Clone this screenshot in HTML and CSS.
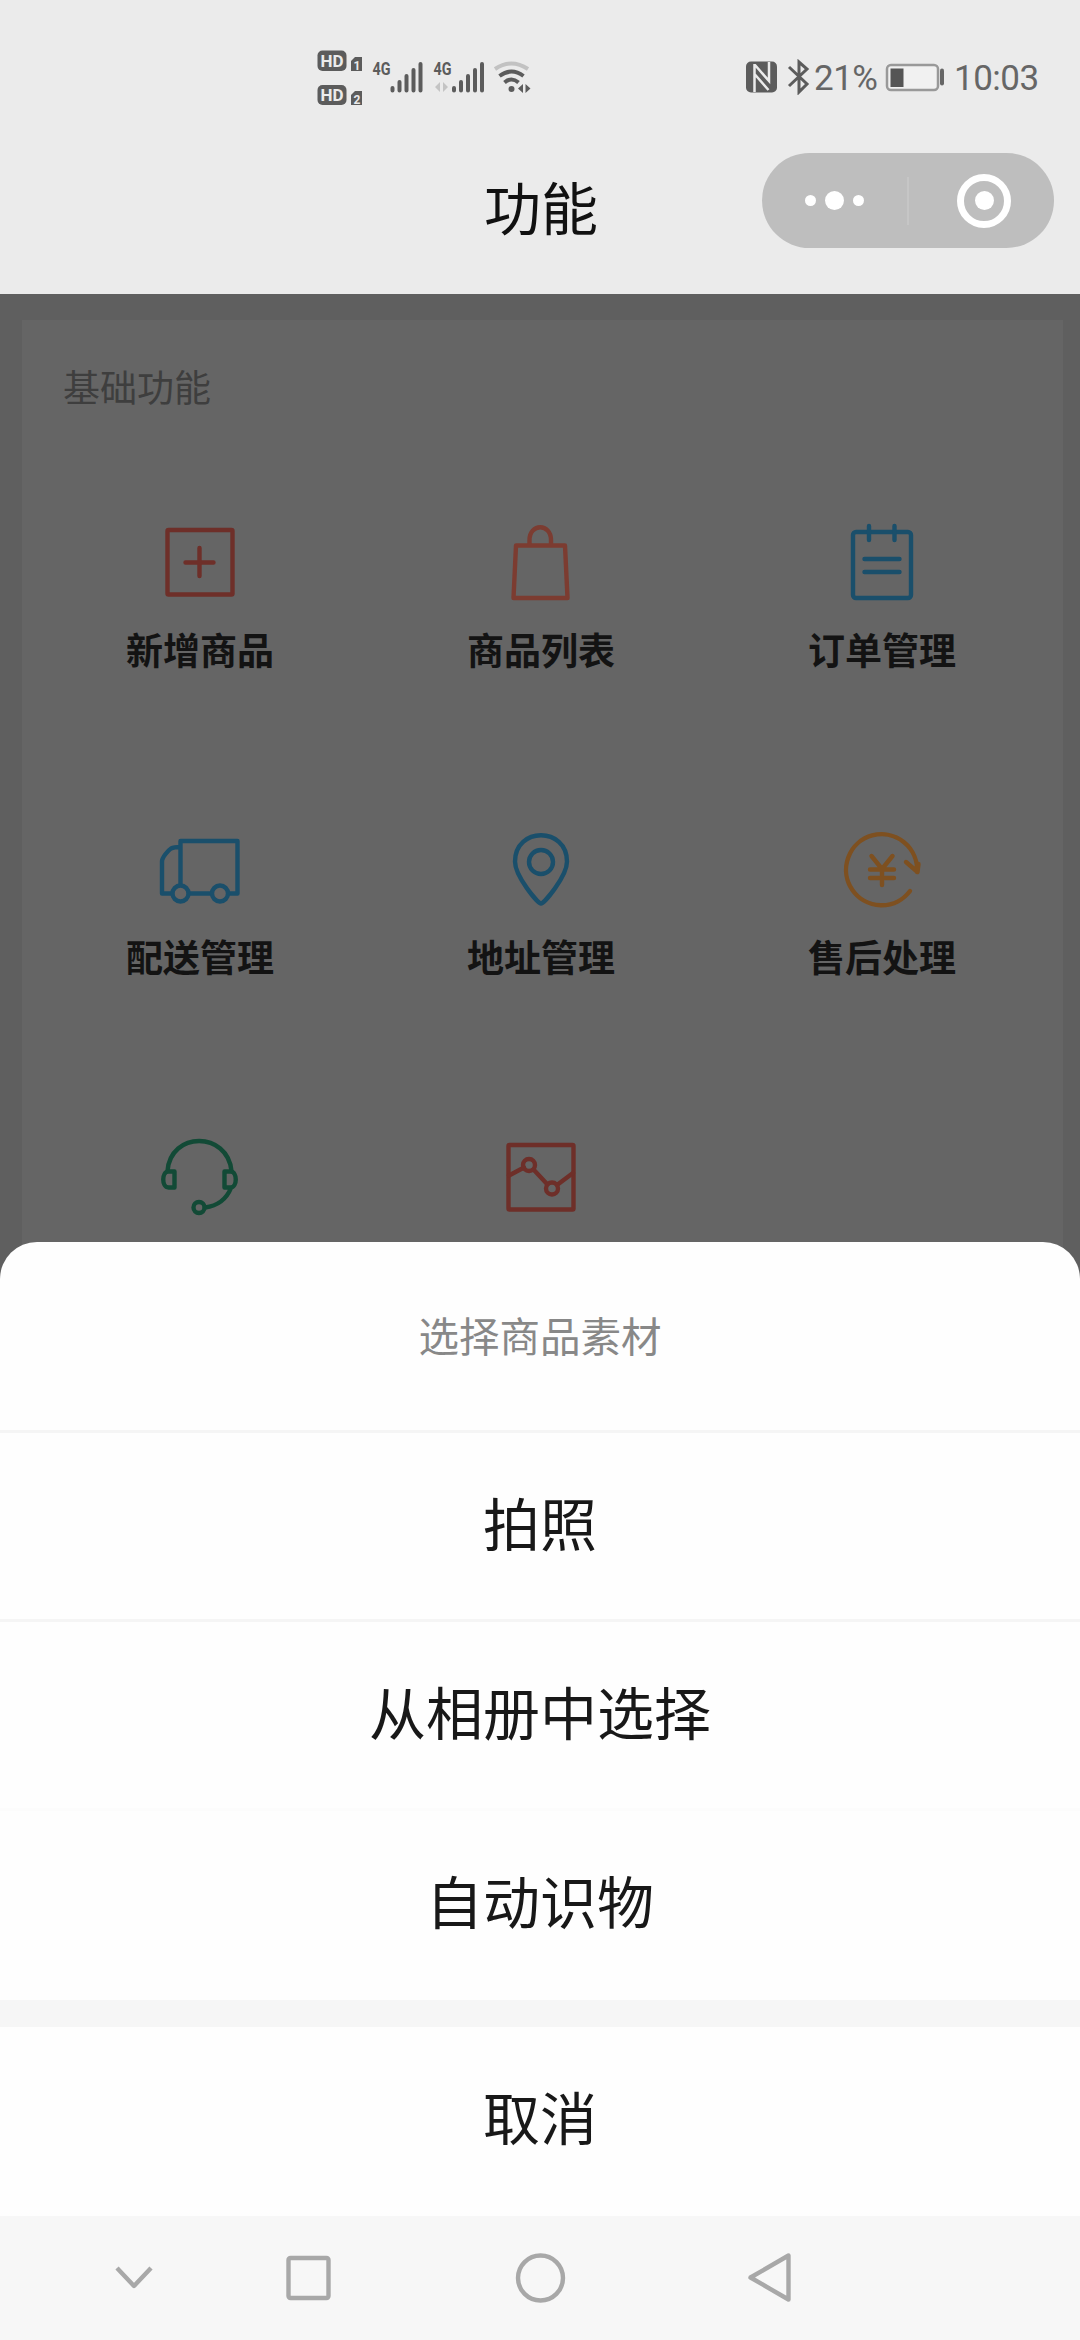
FILE: index.html
```html
<!DOCTYPE html>
<html lang="zh-CN">
<head>
<meta charset="utf-8">
<title>功能</title>
<link rel="stylesheet" href="styles.css">
</head>
<body>
<div class="screen">
  <header class="header">
    <div class="status">
      <svg class="status-left" width="220" height="75" viewBox="315 40 220 75">
        <g fill="#5c5c5c">
          <rect x="317.500" y="50.500" width="29" height="20.500" rx="5"/>
          <path d="M351 61l4-4h7v14h-11z"/>
          <rect x="317.500" y="85" width="29" height="20" rx="5"/>
          <path d="M351 95l4-4h7v14h-11z"/>
        </g>
        <g class="badge-text" fill="#ebebeb">
          <text x="332" y="67" font-size="17" text-anchor="middle">HD</text>
          <text x="357" y="69.500" font-size="12" text-anchor="middle">1</text>
          <text x="332" y="101" font-size="17" text-anchor="middle">HD</text>
          <text x="357" y="103.500" font-size="12" text-anchor="middle">2</text>
        </g>
        <g class="network-text" fill="#5c5c5c">
          <text x="372.500" y="75" font-size="18" textLength="18" lengthAdjust="spacingAndGlyphs">4G</text>
          <text x="433.500" y="75" font-size="18" textLength="18" lengthAdjust="spacingAndGlyphs">4G</text>
        </g>
        <g stroke="#5c5c5c" stroke-width="4" stroke-linecap="round">
          <path d="M392.500 88v2.500M399.500 82v8.500M406.500 76v14.500M413.500 70v20.500M420.500 64v26.500"/>
          <path d="M454 88v2.500M461 82v8.500M468 76v14.500M475 70v20.500M482 64v26.500"/>
        </g>
        <path d="M440 82v10l-5-5zM443 82v10l5-5z" fill="#c4c4c4"/>
        <path d="M495 69q16-11 33 0" fill="none" stroke="#c2c2c2" stroke-width="4"/>
        <path d="M499.500 76q12-9 24 0M504.500 82.500q7-6 14 0" fill="none" stroke="#5c5c5c" stroke-width="4"/>
        <circle cx="511.500" cy="89" r="3" fill="#5c5c5c"/>
        <path d="M523 84v9l-5-4.500zM525.500 84v9l5-4.500z" fill="#5c5c5c"/>
      </svg>
      <div class="status-right">
        <svg width="66" height="36" viewBox="744 59 66 36">
          <rect x="746" y="61.500" width="31" height="31" rx="5" fill="#5c5c5c"/>
          <path d="M754.500 92V64M769 62v19L755 65M754.500 74l14 16" fill="none" stroke="#ebebeb" stroke-width="2.500"/>
          <path d="M789 67l18 17-8 8V62l8 7-18 17" fill="none" stroke="#5c5c5c" stroke-width="3"/>
        </svg>
        <span class="battery-level">21%</span>
        <svg class="battery" width="62" height="32" viewBox="884 61 62 32">
          <rect x="887" y="65" width="51" height="25" rx="4" fill="#f1f1f1" stroke="#999" stroke-width="2.500"/>
          <path d="M890.500 68.500h13v18.500h-13z" fill="#555"/>
          <path d="M942 70.500v13" stroke="#666" stroke-width="4" stroke-linecap="round"/>
        </svg>
        <time class="clock">10:03</time>
      </div>
    </div>
    <div class="titlebar">
      <h1 class="title">功能</h1>
      <div class="capsule">
        <div class="dots"><i class="dot"></i><i class="dot dot-big"></i><i class="dot"></i></div>
        <i class="capsule-line"></i>
        <i class="target"><b class="target-core"></b></i>
      </div>
    </div>
  </header>

  <main class="page">
    <section class="card">
      <h2 class="card-title">基础功能</h2>
      <div class="grid">
        <div class="item">
          <svg class="icon red" viewBox="155 520 90 90"><rect x="167.500" y="530" width="65" height="64.500" rx="1"/><path d="M185.500 562.500h28M199.500 548v28"/></svg>
          <span>新增商品</span>
        </div>
        <div class="item">
          <svg class="icon brick" viewBox="495 520 90 90"><path d="M515 545.500h49l2.500 52.500h-54zM528.500 545v-5c0-17 21.500-17 21.500 0v5"/></svg>
          <span>商品列表</span>
        </div>
        <div class="item">
          <svg class="icon blue" viewBox="836 520 90 90"><rect x="852" y="532" width="58" height="66" rx="3"/><path d="M868 526v14M893.500 526v14M863.500 559h35M863.500 572h35"/></svg>
          <span>订单管理</span>
        </div>
        <div class="item">
          <svg class="icon blue" viewBox="155 827 90 90"><path d="M172 893.500h-10v-32c0-4 6-11 9-13 2-1 5-1.500 9-1.500M180.500 884v-43h57v52.500h-9M189 893.500h22"/><circle cx="180.500" cy="893.500" r="8"/><circle cx="220" cy="893.500" r="8"/></svg>
          <span>配送管理</span>
        </div>
        <div class="item">
          <svg class="icon blue" viewBox="495 827 90 90"><path d="M540 903.500c-3 0-26-27-26-42 0-35 52-35 52 0 0 15-23 42-26 42z"/><circle cx="540" cy="862" r="12"/></svg>
          <span>地址管理</span>
        </div>
        <div class="item">
          <svg class="icon orange" viewBox="836 827 90 90"><path d="M909 891a35.500 35.500 0 1 1 7-19M905 862l11.500 10 1-8"/><path d="M870.500 856l10.500 13 10.500-13M881 869v16M869 869.500h24M869 878h24"/></svg>
          <span>售后处理</span>
        </div>
        <div class="item">
          <svg class="icon green" viewBox="155 1134 90 90"><path d="M167.500 1171c3-40 60-40 64 0"/><path d="M174.500 1171.500h-6c-7 0-7 16 0 16h6zM224.500 1171.500h6c7 0 7 16 0 16h-6zM231 1188q-7 17-26 19.500"/><circle cx="199" cy="1207.500" r="5.500"/></svg>
        </div>
        <div class="item">
          <svg class="icon red" viewBox="495 1134 90 90"><rect x="507.500" y="1145" width="65" height="64.500" rx="1"/><path d="M508 1175.500l15-8M532.500 1169.500l14 15M556 1185l16-12"/><circle cx="528" cy="1165" r="6"/><circle cx="551" cy="1188.500" r="6"/></svg>
        </div>
      </div>
    </section>
  </main>

  <div class="sheet">
    <div class="sheet-title">选择商品素材</div>
    <div class="option ruled">拍照</div>
    <div class="option ruled faint">从相册中选择</div>
    <div class="option">自动识物</div>
    <div class="option cancel">取消</div>
    <nav class="nav">
      <svg width="1080" height="124" viewBox="0 2216 1080 124">
        <path d="M117 2268l17 18 17-18"/>
        <rect x="288.500" y="2258" width="40" height="40" rx="2"/>
        <path d="M788.500 2255.500v44l-38-22z"/>
        <circle cx="540.500" cy="2278" r="22.500"/>
      </svg>
    </nav>
  </div>
</div>
</body>
</html>
```
FILE: styles.css
```css
* { box-sizing: border-box; }
body {
  margin: 0;
  font-family: "Noto Sans CJK SC", sans-serif;
}
.screen {
  position: relative;
  width: 1080px;
  height: 2340px;
  overflow: hidden;
  background: #5f5f5f;
}
svg { display: block; flex: none; }

.header { height: 294px; background: #ebebeb; }
.status {
  display: flex;
  justify-content: space-between;
  height: 115px;
  padding: 40px 43px 0 315px;
}
.badge-text { font-family: Roboto, sans-serif; font-weight: 700; }
.network-text { font-family: Roboto, sans-serif; font-weight: 700; }
.status-right {
  display: flex;
  align-items: flex-start;
  padding-top: 19px;
  font: 35px/40px Roboto, sans-serif;
  color: #666;
}
.battery-level { margin-left: 4px; width: 70px; letter-spacing: -.5px; }
.battery { margin-top: 2px; }
.clock { margin-left: 8px; width: 83px; letter-spacing: -.5px; }

.titlebar {
  display: grid;
  grid-template-columns: 1fr auto 1fr;
  align-items: start;
  padding: 38px 26px 0 28px;
}
.title {
  grid-column: 2;
  margin: 12px 0 0;
  font-size: 57px;
  line-height: 80px;
  font-weight: 400;
  color: #111;
}
.capsule {
  justify-self: end;
  display: flex;
  align-items: center;
  width: 292px;
  height: 95px;
  padding: 0 43px;
  border-radius: 48px;
  background: #bebebe;
}
.dots { display: flex; align-items: center; gap: 9px; }
.dot { width: 11px; height: 11px; border-radius: 50%; background: #fff; }
.dot-big { width: 19px; height: 19px; }
.capsule-line { width: 2px; height: 48px; margin-left: 43px; background: #c6c6c6; }
.target {
  display: flex;
  align-items: center;
  justify-content: center;
  width: 54px;
  height: 54px;
  margin-left: 48px;
  border: 7px solid #fff;
  border-radius: 50%;
}
.target-core { width: 19px; height: 19px; border-radius: 50%; background: #fff; }

.page { padding: 26px 17px 0 22px; }
.card { height: 1000px; background: #656565; }
.card-title {
  margin: 0;
  padding: 38px 0 2px 41px;
  font-size: 37px;
  line-height: 56px;
  font-weight: 400;
  color: #3e3e3e;
}
.grid {
  display: grid;
  grid-template-columns: repeat(3, 341px);
  grid-auto-rows: 307px;
  padding: 104px 0 0 7px;
}
.item {
  display: flex;
  flex-direction: column;
  align-items: center;
  font-size: 37px;
  line-height: 56px;
  font-weight: 700;
  color: #131313;
}
.item span { margin-top: 11px; padding-left: 1px; }
.icon {
  width: 90px;
  height: 90px;
  fill: none;
  stroke-width: 4.4;
  stroke-linecap: round;
  stroke-linejoin: round;
}
.red { stroke: #6e2f29; }
.brick { stroke: #7c3c31; }
.blue { stroke: #1a4f6b; }
.orange { stroke: #7e5020; }
.green { stroke: #124a36; }

.sheet {
  position: absolute;
  left: 0;
  right: 0;
  top: 1242px;
  border-radius: 37px 37px 0 0;
  background: #fefefe;
}
.sheet-title {
  height: 191px;
  border-bottom: 3px solid #f5f5f5;
  font-size: 40.5px;
  line-height: 186px;
  text-align: center;
  color: #888;
}
.option {
  height: 189px;
  font-size: 57px;
  line-height: 176px;
  text-align: center;
  color: #181818;
}
.ruled { border-bottom: 3px solid #f5f5f5; }
.faint { border-bottom-color: #fcfcfc; }
.cancel {
  height: 216px;
  border-top: 27px solid #f6f6f6;
}
.nav { background: #f7f7f7; }
.nav svg {
  fill: none;
  stroke: #a8a8a8;
  stroke-width: 4.4;
  stroke-linejoin: round;
}
```
